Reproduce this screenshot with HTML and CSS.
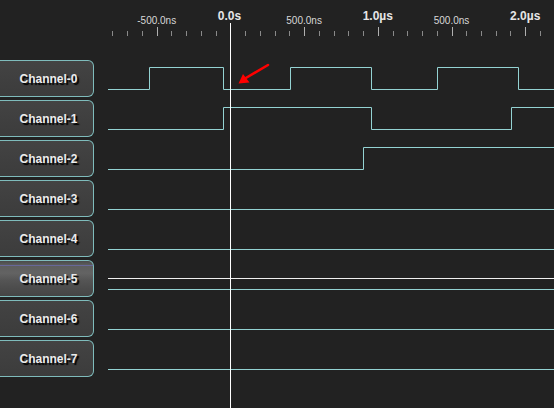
FILE: index.html
```html
<!DOCTYPE html>
<html>
<head>
<meta charset="utf-8">
<link rel="stylesheet" href="styles.css">
</head>
<body>
<div class="scope">
  <aside class="channels">
    <div class="ruler-gap"></div>
    <button class="chan">Channel-0</button>
    <button class="chan">Channel-1</button>
    <button class="chan">Channel-2</button>
    <button class="chan">Channel-3</button>
    <button class="chan">Channel-4</button>
    <button class="chan chan-hot">Channel-5</button>
    <button class="chan">Channel-6</button>
    <button class="chan">Channel-7</button>
  </aside>
  <svg class="plot" viewBox="94 0 460 408" width="460" height="408">
    <g class="ticks" id="ticks"></g>
    <g class="labels">
      <text class="lbl" x="156.7" y="24">-500.0ns</text>
      <text class="lbl-major" x="229.5" y="20">0.0s</text>
      <text class="lbl" x="304.1" y="24">500.0ns</text>
      <text class="lbl-major" x="377.8" y="20">1.0µs</text>
      <text class="lbl" x="451.5" y="24">500.0ns</text>
      <text class="lbl-major" x="525.2" y="20">2.0µs</text>
    </g>
    <g class="traces">
      <path d="M108 89.5 H149.5 V67.5 H223.5 V89.5 H290.5 V67.5 H371.5 V89.5 H437.5 V67.5 H518.5 V89.5 H554"/>
      <path d="M108 129.5 H223.5 V107.5 H371.5 V129.5 H511.5 V107.5 H554"/>
      <path d="M108 169.5 H363.5 V147.5 H554"/>
      <path d="M108 209.5 H554"/>
      <path d="M108 249.5 H554"/>
      <path d="M108 289.5 H554"/>
      <path d="M108 329.5 H554"/>
      <path d="M108 369.5 H554"/>
    </g>
    <path class="ref-line" d="M108 278.5 H554"/>
    <path class="cursor" d="M230.5 23 V408"/>
    <g class="pointer">
      <path class="pointer-shaft" d="M268 65 L245 78.5"/>
      <polygon points="238.5,83.5 243,74 249.5,82.5"/>
    </g>
  </svg>
</div>
<script>
  // minor ticks every 100ns, taller ones every 500ns
  var g = document.getElementById('ticks');
  var ns = 'http://www.w3.org/2000/svg';
  for (var n = -8; n <= 21; n++) {
    var x = Math.round(230.4 + 14.74 * n) + 0.5;
    var major = n % 5 === 0;
    var l = document.createElementNS(ns, 'line');
    l.setAttribute('x1', x); l.setAttribute('x2', x);
    l.setAttribute('y1', major ? 27 : 31); l.setAttribute('y2', 36);
    l.setAttribute('class', major ? 'tick-major' : 'tick');
    g.appendChild(l);
  }
</script>
</body>
</html>
```
FILE: styles.css
```css
html, body {
  margin: 0;
  padding: 0;
  background: #222222;
  width: 554px;
  height: 408px;
  overflow: hidden;
}

.scope {
  display: flex;
  width: 554px;
  height: 408px;
  font-family: "Liberation Sans", Arial, sans-serif;
}

.channels {
  width: 94px;
  display: flex;
  flex-direction: column;
  gap: 3px;
  flex: none;
}

.ruler-gap {
  height: 57px;
  flex: none;
}

.chan {
  height: 37px;
  width: 94px;
  flex: none;
  margin: 0;
  padding: 0 0 0 4px;
  box-sizing: border-box;
  background: linear-gradient(#434343, #3c3c3c);
  border: 1px solid #7fbcbc;
  border-left: none;
  border-radius: 0 6px 6px 0;
  color: #ececec;
  font-family: "Liberation Sans", Arial, sans-serif;
  font-weight: bold;
  font-size: 12px;
  text-shadow: 2px 2px 1px #000;
  text-align: center;
  cursor: pointer;
}

.chan-hot {
  background: linear-gradient(#4a4a4a 0, #5a5a5a 10%, #6b6bb0 12%, #5e5e5e 15%, #636363 35%, #555555 55%, #4d4d4d 75%, #454545 100%);
}

.plot {
  display: block;
  flex: none;
}

.tick {
  stroke: #8a8a8a;
  stroke-width: 1;
}

.tick-major {
  stroke: #b0b0b0;
  stroke-width: 1;
}

.lbl {
  fill: #d8d8d8;
  font-size: 10px;
  text-anchor: middle;
}

.lbl-major {
  fill: #e6e6e6;
  font-size: 12px;
  font-weight: bold;
  text-anchor: middle;
}

.traces path {
  fill: none;
  stroke: #94d3d3;
  stroke-width: 1;
}

.ref-line {
  fill: none;
  stroke: #f0f0f0;
  stroke-width: 1;
}

.cursor {
  fill: none;
  stroke: #ffffff;
  stroke-width: 1;
}

.pointer-shaft {
  stroke: #ff0000;
  stroke-width: 2.5;
  stroke-linecap: round;
}

.pointer polygon {
  fill: #ff0000;
}
```
